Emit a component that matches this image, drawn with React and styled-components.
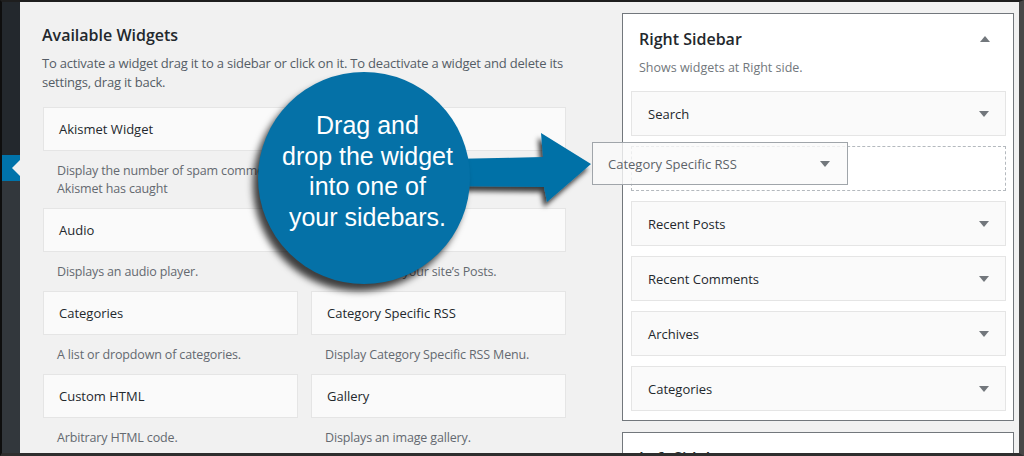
import React from "react";
import styled, { createGlobalStyle } from "styled-components";

const Global = createGlobalStyle`
  html, body { margin: 0; padding: 0; background: #f1f1f1; }
  body { font-family: "Open Sans", "Noto Sans", sans-serif; }
  * { box-sizing: border-box; }
`;

const Frame = styled.div`
  position: relative;
  width: 1024px;
  height: 456px;
  border-top: 2px solid #1e1e1e;
  border-left: 2px solid #0e0e0e;
  border-right: 5px solid #474747;
  border-bottom: 3px solid #2e2e2e;
  display: flex;
  overflow: hidden;
  background: #f1f1f1;
`;

const AdminMenu = styled.div`
  width: 18px;
  display: flex;
  flex-direction: column;
  background: #32373c;
`;

const MenuTop = styled.div`
  height: 153px;
  background: #23282d;
`;

const MenuCurrent = styled.div`
  height: 26px;
  background: #0073aa;
  position: relative;
  &::after {
    content: "";
    position: absolute;
    right: 0;
    top: 5px;
    border-top: 8px solid transparent;
    border-bottom: 8px solid transparent;
    border-right: 8px solid #f1f1f1;
  }
`;

const Content = styled.div`
  flex: 1;
  display: grid;
  grid-template-columns: 524px 392px;
  column-gap: 56px;
  align-items: start;
  padding: 11px 5px 0 22px;
`;

const LeftCol = styled.div`
  padding-top: 10px;
`;

const Heading = styled.h2`
  margin: 0;
  font-size: 16px;
  font-weight: 600;
  line-height: 24px;
  color: #23282d;
`;

const Intro = styled.p`
  margin: 7px 0 15px;
  font-size: 13px;
  line-height: 19px;
  color: #555d66;
  letter-spacing: -0.2px;
`;

const WidgetGrid = styled.div`
  display: grid;
  grid-template-columns: 255px 255px;
  column-gap: 13px;
  margin-left: 1px;
`;

const Widget = styled.div``;

const WidgetTop = styled.div`
  height: 44px;
  background: #fafafa;
  border: 1px solid #e5e5e5;
  display: flex;
  align-items: center;
  padding: 0 15px;
  font-size: 13px;
  color: #23282d;
`;

const WidgetDesc = styled.div`
  padding: 11px 10px 10.5px 14px;
  font-size: 12.5px;
  line-height: 17.5px;
  color: #646970;
  letter-spacing: -0.15px;
`;

const RightCol = styled.div`
  display: flex;
  flex-direction: column;
  gap: 11px;
`;

const SidebarBox = styled.div`
  background: #fff;
  border: 1px solid #72777c;
  padding: 0 7px 9px 8px;
`;

const SidebarHeader = styled.div`
  padding: 13px 16px 0 8px;
  display: flex;
  align-items: center;
  justify-content: space-between;
`;

const SidebarTitle = styled.h2`
  margin: 0;
  font-size: 16px;
  font-weight: 600;
  line-height: 24px;
  color: #23282d;
`;

const SidebarDesc = styled.p`
  margin: 8px 0 14px 8px;
  font-size: 12.5px;
  line-height: 18px;
  color: #72777c;
`;

const Rows = styled.div`
  display: flex;
  flex-direction: column;
  gap: 10px;
`;

const Row = styled.div`
  height: 45px;
  display: flex;
  align-items: center;
  justify-content: space-between;
  padding: 0 16px;
  font-size: 13px;
  color: #23282d;
  background: ${(p) => (p.$placeholder ? "transparent" : "#fafafa")};
  border: 1px ${(p) => (p.$placeholder ? "dashed #b4b9be" : "solid #e5e5e5")};
`;

const Caret = styled.span`
  width: 0;
  height: 0;
  border-left: 5px solid transparent;
  border-right: 5px solid transparent;
  ${(p) =>
    p.$up
      ? "border-bottom: 6px solid #72777c;"
      : "border-top: 6px solid #72777c;"}
`;

const DragHelper = styled.div`
  position: absolute;
  left: 590px;
  top: 140px;
  width: 256px;
  height: 43px;
  display: flex;
  align-items: center;
  justify-content: space-between;
  padding: 0 17px 0 15px;
  background: rgba(250, 250, 250, 0.8);
  border: 1px solid #a0a5aa;
  font-size: 13px;
  color: #5d6369;
  z-index: 3;
`;

const ArrowSvg = styled.svg`
  position: absolute;
  left: 438px;
  top: 118px;
  z-index: 4;
  overflow: visible;
`;

const Bubble = styled.div`
  position: absolute;
  left: 256px;
  top: 70px;
  width: 212px;
  height: 212px;
  border-radius: 50%;
  background: #0571a7;
  box-shadow: -5px 7px 7px rgba(0, 0, 0, 0.75);
  display: flex;
  align-items: center;
  justify-content: center;
  padding: 0 0 14px 7px;
  z-index: 5;
`;

const BubbleText = styled.div`
  font-family: "Liberation Sans", Arial, sans-serif;
  font-size: 25px;
  line-height: 30.5px;
  color: #fff;
  text-align: center;
`;

const widgets = [
  ["Akismet Widget", "Display the number of spam comments Akismet has caught"],
  ["Archives", "A monthly archive of your site’s Posts."],
  ["Audio", "Displays an audio player."],
  ["Calendar", "A calendar of your site’s Posts."],
  ["Categories", "A list or dropdown of categories."],
  ["Category Specific RSS", "Display Category Specific RSS Menu."],
  ["Custom HTML", "Arbitrary HTML code."],
  ["Gallery", "Displays an image gallery."],
];

const sidebarRows = ["Search", null, "Recent Posts", "Recent Comments", "Archives", "Categories"];

export default function App() {
  return (
    <>
      <Global />
      <Frame>
        <AdminMenu>
          <MenuTop />
          <MenuCurrent />
        </AdminMenu>
        <Content>
          <LeftCol>
            <Heading>Available Widgets</Heading>
            <Intro>
              To activate a widget drag it to a sidebar or click on it. To deactivate a widget and delete its
              settings, drag it back.
            </Intro>
            <WidgetGrid>
              {widgets.map(([title, desc]) => (
                <Widget key={title}>
                  <WidgetTop>{title}</WidgetTop>
                  <WidgetDesc>{desc}</WidgetDesc>
                </Widget>
              ))}
            </WidgetGrid>
          </LeftCol>
          <RightCol>
            <SidebarBox>
              <SidebarHeader>
                <SidebarTitle>Right Sidebar</SidebarTitle>
                <Caret $up />
              </SidebarHeader>
              <SidebarDesc>Shows widgets at Right side.</SidebarDesc>
              <Rows>
                {sidebarRows.map((r, i) =>
                  r ? (
                    <Row key={i}>
                      {r}
                      <Caret />
                    </Row>
                  ) : (
                    <Row key={i} $placeholder />
                  )
                )}
              </Rows>
            </SidebarBox>
            <SidebarBox>
              <SidebarHeader>
                <SidebarTitle>Left Sidebar</SidebarTitle>
                <Caret $up />
              </SidebarHeader>
            </SidebarBox>
          </RightCol>
        </Content>
        <DragHelper>
          Category Specific RSS
          <Caret />
        </DragHelper>
        <ArrowSvg width="160" height="100" viewBox="0 0 160 100">
          <defs>
            <filter id="sh" x="-30%" y="-30%" width="160%" height="170%">
              <feDropShadow dx="-3" dy="5" stdDeviation="2.5" floodColor="#000" floodOpacity="0.75" />
            </filter>
          </defs>
          <polygon
            points="10,39 103,37 101,13 151,44 107,82 104,67 10,66"
            fill="#0571a7"
            filter="url(#sh)"
          />
        </ArrowSvg>
        <Bubble>
          <BubbleText>
            Drag and
            <br />
            drop the widget
            <br />
            into one of
            <br />
            your sidebars.
          </BubbleText>
        </Bubble>
      </Frame>
    </>
  );
}
